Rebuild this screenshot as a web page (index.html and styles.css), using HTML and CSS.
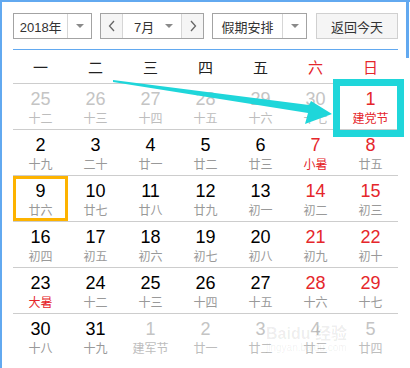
FILE: index.html
```html
<!DOCTYPE html>
<html lang="zh-CN">
<head>
  <meta charset="UTF-8">
  <title>万年历</title>
  <link rel="stylesheet" href="styles.css">
</head>
<body>
  <div class="panel">
    <!-- 顶部工具栏 -->
    <div class="toolbar">
      <div class="select year">
        <span class="val">2018年</span>
        <span class="drop"><i class="caret"></i></span>
      </div>
      <div class="month-group">
        <span class="nav"><svg width="8" height="12" viewBox="0 0 8 12"><polyline points="6,1 1.5,6 6,11" fill="none" stroke="#666" stroke-width="1.3"/></svg></span>
        <span class="month"><span class="val">7月</span><i class="caret"></i></span>
        <span class="nav"><svg width="8" height="12" viewBox="0 0 8 12"><polyline points="2,1 6.5,6 2,11" fill="none" stroke="#666" stroke-width="1.3"/></svg></span>
      </div>
      <div class="select holiday">
        <span class="val">假期安排</span>
        <span class="drop"><i class="caret"></i></span>
      </div>
      <button class="today">返回今天</button>
    </div>
    <div class="rule"></div>

    <!-- 星期 -->
    <div class="week">
      <span>一</span><span>二</span><span>三</span><span>四</span><span>五</span><span class="red">六</span><span class="red">日</span>
    </div>

    <!-- 日期 -->
    <div class="days">
      <div class="row">
        <div class="cell other"><b>25</b><em>十二</em></div>
        <div class="cell other"><b>26</b><em>十三</em></div>
        <div class="cell other"><b>27</b><em>十四</em></div>
        <div class="cell other"><b>28</b><em>十五</em></div>
        <div class="cell other"><b>29</b><em>十六</em></div>
        <div class="cell other"><b>30</b><em>十七</em></div>
        <div class="cell wkend"><b>1</b><em class="fest">建党节</em></div>
      </div>
      <div class="row">
        <div class="cell"><b>2</b><em>十九</em></div>
        <div class="cell"><b>3</b><em>二十</em></div>
        <div class="cell"><b>4</b><em>廿一</em></div>
        <div class="cell"><b>5</b><em>廿二</em></div>
        <div class="cell"><b>6</b><em>廿三</em></div>
        <div class="cell wkend"><b>7</b><em class="fest">小暑</em></div>
        <div class="cell wkend"><b>8</b><em>廿五</em></div>
      </div>
      <div class="row">
        <div class="cell today-cell"><b>9</b><em>廿六</em></div>
        <div class="cell"><b>10</b><em>廿七</em></div>
        <div class="cell"><b>11</b><em>廿八</em></div>
        <div class="cell"><b>12</b><em>廿九</em></div>
        <div class="cell"><b>13</b><em>初一</em></div>
        <div class="cell wkend"><b>14</b><em>初二</em></div>
        <div class="cell wkend"><b>15</b><em>初三</em></div>
      </div>
      <div class="row">
        <div class="cell"><b>16</b><em>初四</em></div>
        <div class="cell"><b>17</b><em>初五</em></div>
        <div class="cell"><b>18</b><em>初六</em></div>
        <div class="cell"><b>19</b><em>初七</em></div>
        <div class="cell"><b>20</b><em>初八</em></div>
        <div class="cell wkend"><b>21</b><em>初九</em></div>
        <div class="cell wkend"><b>22</b><em>初十</em></div>
      </div>
      <div class="row">
        <div class="cell"><b>23</b><em class="fest">大暑</em></div>
        <div class="cell"><b>24</b><em>十二</em></div>
        <div class="cell"><b>25</b><em>十三</em></div>
        <div class="cell"><b>26</b><em>十四</em></div>
        <div class="cell"><b>27</b><em>十五</em></div>
        <div class="cell wkend"><b>28</b><em>十六</em></div>
        <div class="cell wkend"><b>29</b><em>十七</em></div>
      </div>
      <div class="row">
        <div class="cell"><b>30</b><em>十八</em></div>
        <div class="cell"><b>31</b><em>十九</em></div>
        <div class="cell other"><b>1</b><em>建军节</em></div>
        <div class="cell other"><b>2</b><em>廿一</em></div>
        <div class="cell other"><b>3</b><em>廿二</em></div>
        <div class="cell other"><b>4</b><em>廿三</em></div>
        <div class="cell other"><b>5</b><em>廿四</em></div>
      </div>
    </div>

    <!-- 标注 -->
    <div class="mark"></div>
    <svg class="arrow" width="410" height="368" viewBox="0 0 410 368">
      <polygon points="113,80 309,105 311,101 332,114 305,124 308,113 113,82" fill="#1fd6da"/>
    </svg>
    <div class="watermark"><span class="wm-big">Bai<i>du</i> 经验</span><span class="wm-small">jingyan.baidu.com</span></div>
  </div>
</body>
</html>
```

FILE: styles.css
```css
* { box-sizing: border-box; }
body { margin: 0; background: #fff; font-family: "Liberation Sans", "Noto Sans CJK SC", sans-serif; }
.panel { position: relative; width: 410px; height: 368px; overflow: hidden; border-top: 2px solid #62a9f0; border-left: 2px solid #62a9f0; padding: 11px 12px 0 11px; }
.panel::after { content: ""; position: absolute; right: 1px; top: 0; width: 3px; height: 56px; background: #62a9f0; }

.toolbar { display: flex; gap: 8px; height: 26px; font-size: 13px; color: #333; }
.select { display: flex; border: 1px solid #a3a3a3; background: #fff; }
.select .val { display: flex; align-items: center; justify-content: center; }
.select .drop { display: flex; align-items: center; justify-content: center; width: 24px; border-left: 1px solid #d6d6d6; }
.year { width: 79px; }
.year .val { width: 54px; }
.holiday { width: 95px; }
.holiday .val { width: 70px; }
.caret { display: inline-block; width: 0; height: 0; border-left: 4px solid transparent; border-right: 4px solid transparent; border-top: 4px solid #8a8a8a; }

.month-group { display: flex; width: 104px; border: 1px solid #a3a3a3; }
.nav { display: flex; align-items: center; justify-content: center; width: 21px; background: #f5f5f5; }
.month { display: flex; align-items: center; width: 60px; padding: 0 8px 0 11px; justify-content: space-between; border-left: 1px solid #d6d6d6; border-right: 1px solid #d6d6d6; background: #fff; }
.today { width: 82px; margin-left: 1px; padding: 0; border: 1px solid #d0d0d0; background: #f5f5f5; font: inherit; color: #333; }

.rule { height: 1px; margin-top: 10px; background: #62a9f0; }

.week { display: grid; grid-template-columns: repeat(7, 55px); height: 33px; align-items: center; text-align: center; font-family: "Noto Sans CJK SC", sans-serif; font-size: 15px; color: #222; }
.red { color: #e5262b; }

.row { display: grid; grid-template-columns: repeat(7, 55px); height: 46px; border-top: 1px solid #cdcdcd; }
.cell { display: flex; flex-direction: column; align-items: center; padding-top: 4px; }
.cell b { font-weight: normal; font-size: 18px; line-height: 22px; color: #000; }
.cell em { font-style: normal; font-family: "Noto Sans CJK SC", sans-serif; font-size: 12px; line-height: 16px; color: #999; }
.cell.wkend b { color: #e5262b; }
.cell.other b { color: #c4c4c4; }
.cell.other em { color: #bdbdbd; }
.cell em.fest { color: #e5262b; }
.today-cell { box-shadow: inset 0 0 0 3px #fdb300; }

.mark { position: absolute; left: 331px; top: 77px; width: 71px; height: 58px; border: 7px solid #1fd6da; }
.arrow { position: absolute; left: -2px; top: -2px; }

.watermark { position: absolute; left: 264px; top: 318px; display: flex; flex-direction: column; color: rgba(0, 0, 0, 0.07); pointer-events: none; }
.wm-big { font-size: 16px; font-weight: bold; font-family: "Liberation Sans", "Noto Sans CJK SC", sans-serif; }
.wm-big i { font-style: normal; }
.wm-small { font-size: 10px; margin-top: -2px; }
```
